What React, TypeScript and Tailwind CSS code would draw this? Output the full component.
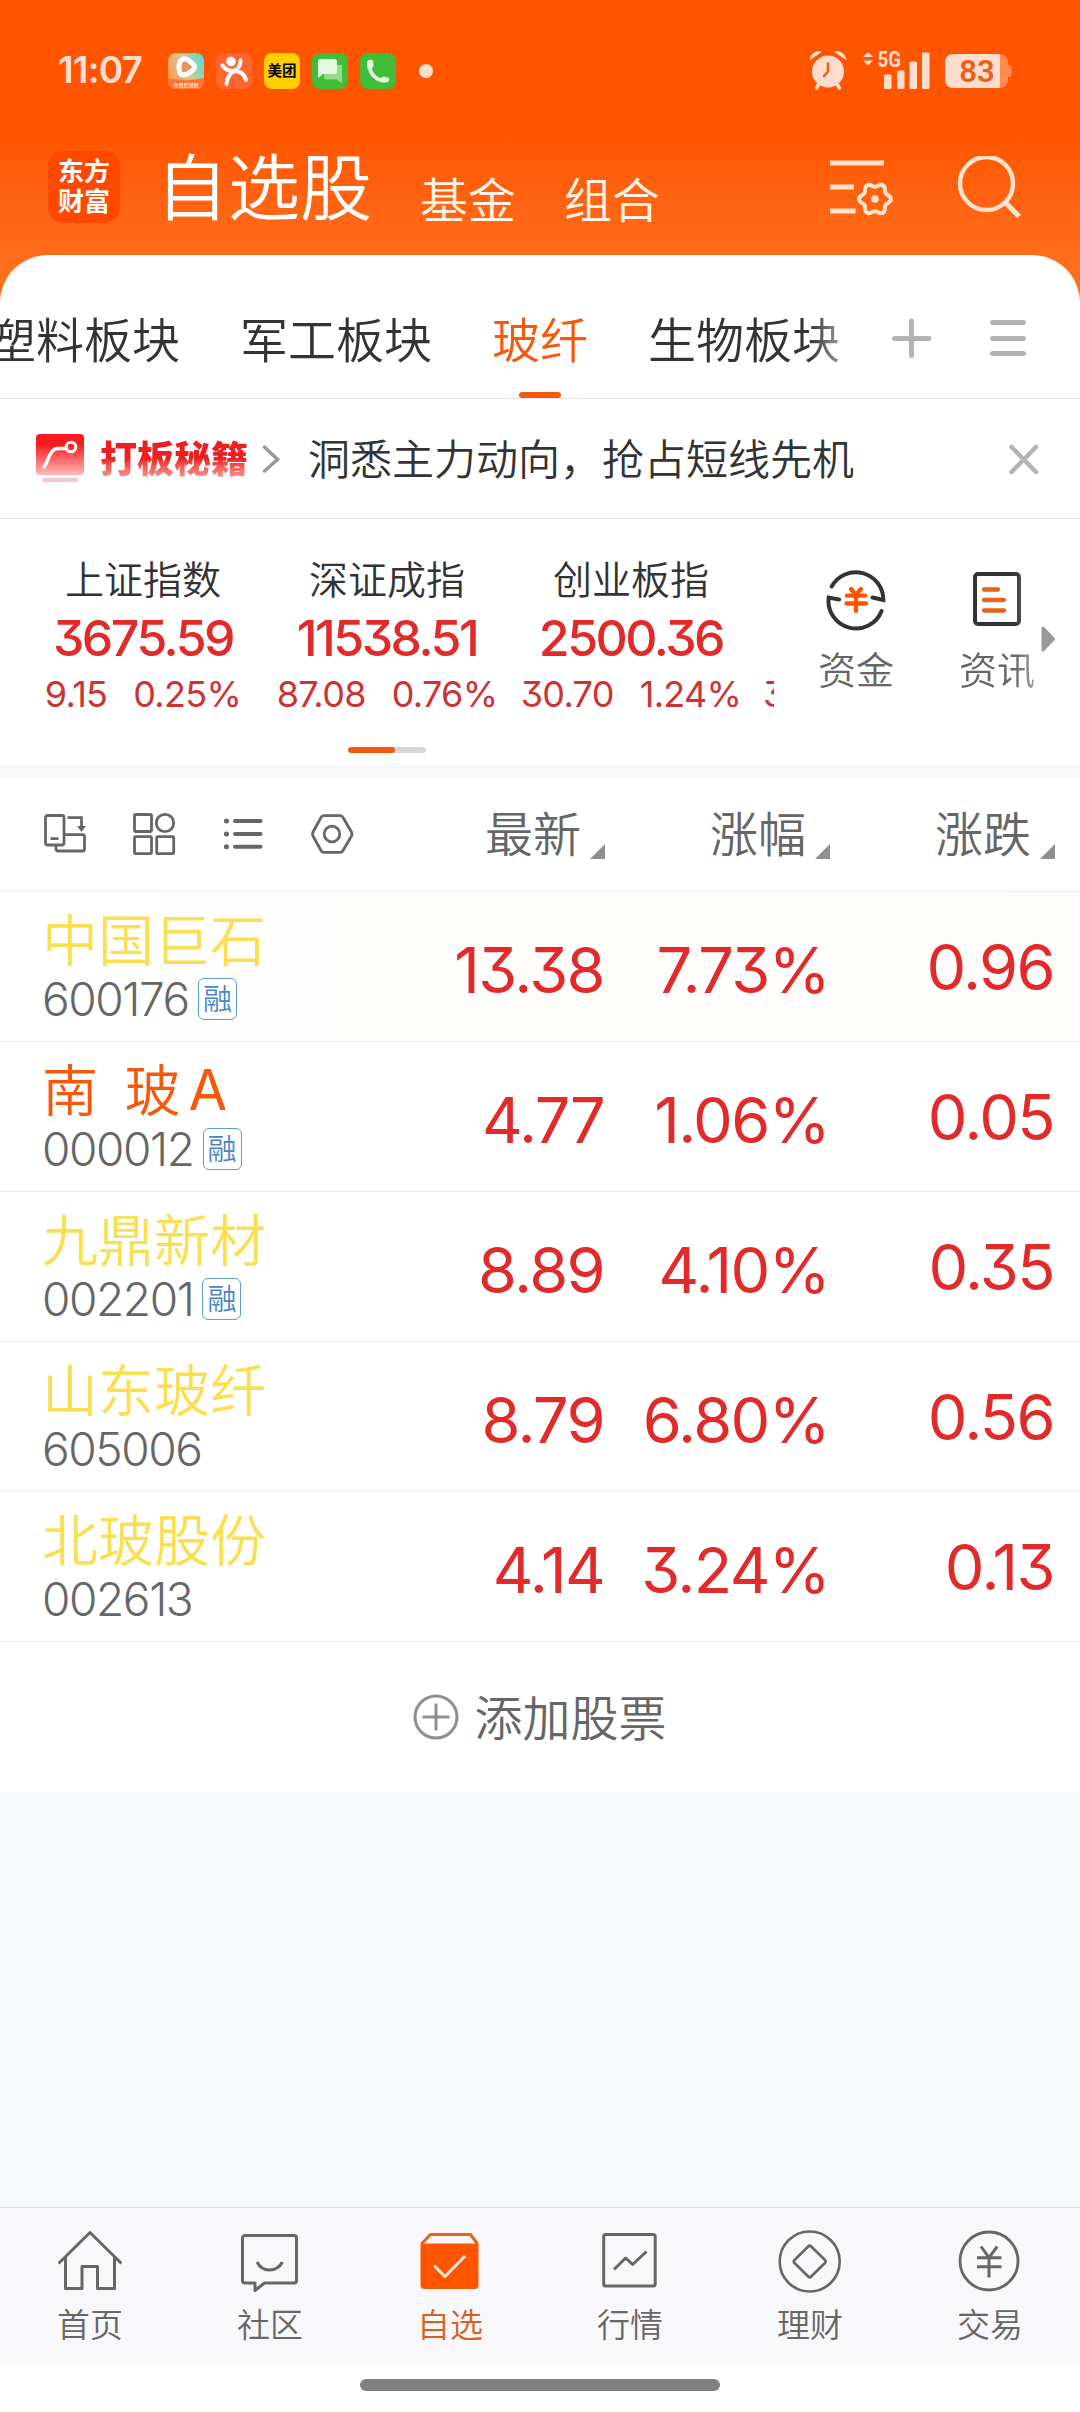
import type { ReactNode } from "react";

const indices = [
  { name: "上证指数", value: "3675.59", change: "9.15", percent: "0.25%" },
  { name: "深证成指", value: "11538.51", change: "87.08", percent: "0.76%" },
  { name: "创业板指", value: "2500.36", change: "30.70", percent: "1.24%" },
];

const stocks = [
  { name: "中国巨石", suffix: "", code: "600176", margin: true, price: "13.38", percent: "7.73%", change: "0.96", color: "text-[#fbdf52]", row: "bg-linear-to-r from-white to-[#fffdfb]" },
  { name: "南 玻", suffix: "A", code: "000012", margin: true, price: "4.77", percent: "1.06%", change: "0.05", color: "text-[#f4590c]", row: "bg-white" },
  { name: "九鼎新材", suffix: "", code: "002201", margin: true, price: "8.89", percent: "4.10%", change: "0.35", color: "text-[#fbdf52]", row: "bg-white" },
  { name: "山东玻纤", suffix: "", code: "605006", margin: false, price: "8.79", percent: "6.80%", change: "0.56", color: "text-[#fbdf52]", row: "bg-white" },
  { name: "北玻股份", suffix: "", code: "002613", margin: false, price: "4.14", percent: "3.24%", change: "0.13", color: "text-[#fbdf52]", row: "bg-white" },
];

// six-lobed gear outline around (cx, cy)
const gearPath = (cx: number, cy: number, r: number, depth: number) => {
  const points = Array.from({ length: 72 }, (_, i) => {
    const a = (i * Math.PI) / 36;
    const d = r + depth * Math.cos(6 * a);
    return `${(cx + d * Math.cos(a)).toFixed(2)} ${(cy + d * Math.sin(a)).toFixed(2)}`;
  });
  return `M${points.join("L")}Z`;
};

const StatusBar = () => (
  <div className="flex h-[142px] items-center pl-[58px] pr-[68px] text-[#ffddcc]">
    <span className="w-[110px] pb-[3px] font-[Inter] text-[37px] font-semibold leading-none tracking-[-0.800px]">11:07</span>
    <div className="flex items-center gap-3">
      <svg className="size-9" viewBox="0 0 36 36">
        <defs>
          <linearGradient id="video" x1="0" y1="0.6" x2="1" y2="0.2">
            <stop offset="0" stopColor="#ff9a4c" />
            <stop offset="0.5" stopColor="#d9c79a" />
            <stop offset="1" stopColor="#52e0cf" />
          </linearGradient>
        </defs>
        <rect width="36" height="36" rx="8" fill="url(#video)" />
        <path d="M0 25Q18 29 36 25V28a8 8 0 0 1-8 8H8a8 8 0 0 1-8-8Z" fill="#ff7336" />
        <path d="M13 7.500Q16 4.500 20 7L25 11Q28 14 25 17L19 21Q13 24 11.500 18Q10 11 13 7.500Z" fill="#e8925a" stroke="#fff" strokeWidth="5" />
        <text x="18" y="34" textAnchor="middle" fontSize="5" fontWeight="700" fill="#ffd9bd" fontFamily="Noto Sans CJK SC">免费看短剧</text>
      </svg>
      <svg className="size-9" viewBox="0 0 36 36">
        <rect width="36" height="36" rx="8" fill="#ff6630" />
        <circle cx="15" cy="8.500" r="4.800" fill="#fff" />
        <path d="M6.500 12.500Q11 19 18 17.500Q24 16 24.500 7.500M10.500 31Q11 22 18 18.500M17 18.500Q27 17 30 27" fill="none" stroke="#fff" strokeWidth="4" strokeLinecap="round" />
      </svg>
      <div className="flex size-9 items-center justify-center rounded-lg bg-[#ffd000] pb-0.5 font-['Noto_Sans_CJK_SC',sans-serif] text-[14.500px] font-bold leading-none text-black">美团</div>
      <svg className="size-9" viewBox="0 0 36 36">
        <rect width="36" height="36" rx="8" fill="#41bd38" />
        <path d="M12 12H30V30.500L25 26.500H14A2 2 0 0 1 12 24.500Z" fill="#92dc8a" />
        <path d="M8 6H22.500A2.500 2.500 0 0 1 25 8.500V18.500A2.500 2.500 0 0 1 22.500 21H11L6 25V8A2 2 0 0 1 8 6Z" fill="#e4f8e2" />
      </svg>
      <svg className="size-9" viewBox="0 0 36 36">
        <rect width="36" height="36" rx="8" fill="#41bd38" />
        <path d="M7 9C7 7 12 5.500 13 8L13.500 13C13.500 14.500 11.500 15 12 16.500C13 20 16.500 23.500 20 25C21.500 25.500 22 23.500 23.500 23.500L28 24.500C30.500 25.500 29 29 26.500 29.500C16 31 6 20 7 9Z" fill="#e4f8e2" />
      </svg>
    </div>
    <span className="ml-[23px] size-3.5 rounded-full bg-current" />
    <div className="ml-auto flex items-center">
      <svg className="h-10 w-[38px]" viewBox="0 0 38 40">
        <circle cx="18" cy="20.500" r="16" fill="currentColor" />
        <path d="M0 8.500C1 3 6 -.5 11 1ZM36 8.500C35 3 30 -.5 25 1Z" fill="currentColor" stroke="currentColor" strokeWidth="1" />
        <path d="M9 33l-2.500 4M27 33l2.500 4" stroke="currentColor" strokeWidth="3.500" strokeLinecap="round" />
        <path d="M18 12.500V20.500L14 25" fill="none" stroke="#f05d14" strokeWidth="2.600" strokeLinecap="round" strokeLinejoin="round" />
      </svg>
      <svg className="ml-[15px] h-10 w-[68px]" viewBox="0 0 68 40">
        <path d="M0 6l5-5 5 5ZM0 9.500l5 5 5-5Z" fill="currentColor" />
        <text x="14.500" y="16" fontSize="22" fontWeight="700" textLength="23.500" lengthAdjust="spacingAndGlyphs" fill="currentColor" fontFamily="Roboto">5G</text>
        <rect x="21" y="23.500" width="7.500" height="14.500" rx="1.500" fill="currentColor" />
        <rect x="34" y="19.500" width="7.500" height="18.500" rx="1.500" fill="currentColor" />
        <rect x="46.500" y="10.500" width="7.500" height="27.500" rx="1.500" fill="currentColor" />
        <rect x="59" y="1.500" width="7.500" height="36.500" rx="1.500" fill="currentColor" />
      </svg>
      <svg className="ml-3.5 h-[34px] w-[67px]" viewBox="0 0 67 34">
        <path d="M55 0a8 8 0 0 1 8 8v3h1.500a2 2 0 0 1 2 2v8a2 2 0 0 1-2 2H63v3a8 8 0 0 1-8 8Z" fill="#ff8b50" />
        <path d="M8 0H55V34H8A8 8 0 0 1 0 26V8A8 8 0 0 1 8 0Z" fill="currentColor" />
        <text x="32" y="28" textAnchor="middle" fontSize="31" fontWeight="600" fill="#f05d14" fontFamily="Roboto">83</text>
      </svg>
    </div>
  </div>
);

const Header = () => (
  <div className="flex h-[113px] items-start pl-12 pr-[58px] pt-[9px]">
    <div className="flex size-[72px] flex-col items-center justify-center rounded-[15px] bg-[#ff4800] pb-1 font-['Noto_Sans_CJK_SC',sans-serif] text-[26px] font-bold leading-[30px] text-white">
      <span>东方</span>
      <span>财富</span>
    </div>
    <h1 className="ml-9 text-[72px] font-[350] leading-[64px] text-white">自选股</h1>
    <span className="ml-12 mt-[22px] text-[48px] leading-[48px] text-[#fff3e6]">基金</span>
    <span className="ml-12 mt-[22px] text-[48px] leading-[48px] text-[#fff3e6]">组合</span>
    <svg className="ml-auto mt-1.5 h-[62px] w-[66px]" viewBox="0 0 66 62" fill="none" stroke="#ffe3cb" strokeWidth="5">
      <path d="M1 6H55M1 30H25M1 54H26.500" />
      <path d={gearPath(46, 42, 14, 1.9)} strokeWidth="4" strokeLinejoin="round" />
      <circle cx="46" cy="42" r="3.800" fill="#ffe3cb" stroke="none" />
    </svg>
    <svg className="ml-[61px] mt-[5px] h-[68px] w-[66px]" viewBox="0 0 66 68" fill="none" stroke="#ffe3cb" strokeWidth="4.500">
      <circle cx="30.500" cy="27.500" r="26.500" />
      <path d="M49 46L63 60.500" strokeWidth="5" />
    </svg>
  </div>
);

const GroupTabs = () => (
  <div className="flex h-36 border-b border-[#e3e3e3]">
    <div className="flex w-[838px] gap-[60px] overflow-hidden whitespace-nowrap text-[48px] leading-[48px] text-[#333] mask-r-from-[810px] mask-r-to-[870px]">
      <span className="-ml-3 shrink-0 pt-[58px]">塑料板块</span>
      <span className="shrink-0 pt-[58px]">军工板块</span>
      <span className="flex shrink-0 flex-col items-center justify-between pt-[58px] text-[#f4590c]">
        玻纤
        <span className="h-1.5 w-[42px] rounded-full bg-[#f4590c]" />
      </span>
      <span className="shrink-0 pt-[58px]">生物板块</span>
    </div>
    <svg className="ml-[53px] mt-[63px] size-10" viewBox="0 0 40 40" stroke="#b3b3b3" strokeWidth="5" strokeLinecap="round">
      <path d="M20.500 3V37.500M3.500 20.500H38" />
    </svg>
    <svg className="ml-[58px] mt-[63px] size-10" viewBox="0 0 40 40" stroke="#b3b3b3" strokeWidth="5" strokeLinecap="round">
      <path d="M3.500 4.500H34.500M3.500 20.500H34.500M3.500 35.500H34.500" />
    </svg>
  </div>
);

const Promo = () => (
  <div className="flex h-[120px] items-center border-b border-[#e3e3e3] pl-9 pr-[41px]">
    <svg className="h-[50px] w-12" viewBox="0 0 48 50">
      <defs>
        <linearGradient id="promo" x1="0" y1="0" x2="0" y2="1">
          <stop offset="0.250" stopColor="#fc1a1e" />
          <stop offset="1" stopColor="#fdb9ba" />
        </linearGradient>
      </defs>
      <rect width="48" height="41" rx="4" fill="url(#promo)" />
      <rect x="6" y="44" width="36" height="4" rx="2" fill="#fac4c5" />
      <path d="M8 33C13 27 13 15 22 14.500H30" fill="none" stroke="#fff" strokeWidth="3.500" strokeLinecap="round" />
      <circle cx="35" cy="13" r="4.800" fill="none" stroke="#fff" strokeWidth="3" />
    </svg>
    <span className="ml-4 bg-linear-to-b from-[#ee1f23] from-50% to-[#fb9b9c] to-100% bg-clip-text pb-1 text-[37px] font-black leading-[38px] text-transparent">打板秘籍</span>
    <svg className="ml-3.5 h-[30px] w-5" viewBox="0 0 20 30" fill="none" stroke="#999" strokeWidth="3.500" strokeLinecap="round">
      <path d="M2.500 3L15.500 15.500L2.500 27" />
    </svg>
    <span className="ml-[26px] pb-1 text-[42px] leading-[42px] text-[#333]">洞悉主力动向，抢占短线先机</span>
    <svg className="ml-auto size-8" viewBox="0 0 32 32" stroke="#b3b3b3" strokeWidth="4.500" strokeLinecap="round">
      <path d="M4.500 4L29 29M29 4L4.500 29" />
    </svg>
  </div>
);

const Indices = () => (
  <div className="flex h-[246px]">
    <div className="w-[774px] overflow-hidden">
      <div className="flex w-[1100px] pl-[21px]">
        {indices.map((item) => (
          <div key={item.name} className="flex w-[244px] flex-col items-center whitespace-nowrap pt-9">
            <span className="text-[39px] leading-[44px] text-[#333]">{item.name}</span>
            <span className="mt-[13px] font-[Inter] text-[50px] font-medium leading-[52px] tracking-[-2.500px] text-[#e12b2b] [font-feature-settings:'cv09']">{item.value}</span>
            <span className="mt-[11px] flex gap-[26px] font-[Inter] text-[36px] font-[370] leading-[38px] tracking-[-0.700px] text-[#cc3333] [font-feature-settings:'cv09']">
              <span>{item.change}</span>
              <span>{item.percent}</span>
            </span>
          </div>
        ))}
        <span className="mt-[156px] pl-2.5 font-[Inter] text-[36px] font-[370] leading-[38px] text-[#cc3333] [font-feature-settings:'cv09']">35.22</span>
      </div>
      <div className="ml-[348px] mt-[34px] h-1.5 w-[78px] overflow-hidden rounded-full bg-[#d3d7dc]">
        <div className="h-full w-[47px] rounded-full bg-[#f4590c]" />
      </div>
    </div>
    <div className="flex flex-1 pl-[41px] pt-12 text-[38px] leading-[38px] text-[#666]">
      <div className="flex w-[82px] flex-col items-center gap-[18px]">
        <svg className="size-16" viewBox="0 0 64 64" fill="none" strokeLinecap="round">
          <path d="M7.700 19.500A27.500 27.500 0 0 1 59.300 33L48.500 30.500M57.600 44A27.500 27.500 0 0 1 4.700 30.500L15 32.500" stroke="#333" strokeWidth="4" />
          <path d="M27 22L32 28L37 22M23 28.700H41M22.500 36.500H42M32 28V44" stroke="#ff5500" strokeWidth="4.300" />
        </svg>
        <span className="whitespace-nowrap">资金</span>
      </div>
      <div className="ml-[59px] flex w-[82px] flex-col items-center gap-[18px] mask-r-from-70% mask-r-to-140%">
        <svg className="size-16" viewBox="0 0 64 64" fill="none">
          <rect x="10" y="7" width="44" height="50" rx="3" stroke="#333" strokeWidth="4" />
          <path d="M19 22.500H33M19 33H39M19 43.500H39" stroke="#e8621c" strokeWidth="4.300" strokeLinecap="round" />
        </svg>
        <span className="whitespace-nowrap">资讯</span>
      </div>
      <svg className="ml-0.5 mt-[59px] h-[26px] w-4" viewBox="0 0 16 26">
        <path d="M3 2V24L13.500 13Z" fill="#999" stroke="#999" strokeWidth="3" strokeLinejoin="round" />
      </svg>
    </div>
  </div>
);

const Column = ({ label }: { label: string }) => (
  <div className="flex w-[225px] items-end justify-end">
    <span className="whitespace-nowrap">{label}</span>
    <svg className="mb-[-4px] ml-[9px] size-[15px]" viewBox="0 0 15 15">
      <path d="M15 0V15H0Z" fill="#8e8e93" />
    </svg>
  </div>
);

const TableHead = () => (
  <div className="flex h-[115px] items-start border-b border-[#e8e8e8] bg-white pl-[42px] pr-[25px] pt-[30px] text-[48px] leading-[48px] text-[#666]">
    <div className="flex flex-1 gap-[41px] pt-[3px]">
      <svg className="size-12 shrink-0" viewBox="0 0 48 48" fill="none" stroke="#666" strokeWidth="2.800">
        <rect x="3.500" y="5.500" width="18.500" height="29.500" rx="2" />
        <path d="M8.500 28.700H16.500M22 24.700H40.500A2 2 0 0 1 42.500 26.700V39A2 2 0 0 1 40.500 41H16A2 2 0 0 1 14 39V35M25.500 7.700H39.500V17" />
        <path d="M35 16H44L39.500 22Z" fill="#666" stroke="none" />
      </svg>
      <svg className="size-12 shrink-0" viewBox="1 0 48 48" fill="none" stroke="#666" strokeWidth="2.800">
        <rect x="4.500" y="4.500" width="17" height="17" rx="1" />
        <circle cx="35" cy="13" r="8.700" />
        <rect x="4.500" y="26.700" width="17" height="17" rx="1" />
        <rect x="26.700" y="26.700" width="17" height="17" rx="1" />
      </svg>
      <svg className="size-12 shrink-0" viewBox="2 0 48 48" stroke="#666" strokeWidth="4" strokeLinecap="round">
        <path d="M17 11H42.500M17 24H42.500M17 36.700H42.500" />
        <path d="M8.400 11H8.500M8.400 24H8.500M8.400 36.700H8.500" strokeWidth="5" />
      </svg>
      <svg className="size-12 shrink-0" viewBox="1 0 48 48" fill="none" stroke="#666" strokeWidth="2.800" strokeLinejoin="round">
        <path d="M15.500 5.700H32.500Q34 5.700 35 7.500L43.500 22Q44.500 24 43.500 26L35 40.500Q34 42.300 32.500 42.300H15.500Q14 42.300 13 40.500L5 26Q4 24 5 22L13 7.500Q14 5.700 15.500 5.700Z" />
        <circle cx="24" cy="24" r="7.800" />
      </svg>
    </div>
    <Column label="最新" />
    <Column label="涨幅" />
    <Column label="涨跌" />
  </div>
);

const StockRow = ({ stock }: { stock: (typeof stocks)[number] }) => (
  <div className={`flex h-[150px] border-b border-[#ebebeb] pl-[42px] pr-[26px] ${stock.row}`}>
    <div className="flex-1">
      <div className={`mt-[17px] flex h-14 whitespace-pre text-[56px] leading-[56px] [word-spacing:14px] ${stock.color}`}>
        <span>{stock.name}</span>
        {stock.suffix && <span className="ml-2 pt-[3px] font-[Inter] font-normal">{stock.suffix}</span>}
      </div>
      <div className="mt-[13px] flex items-center gap-[9px]">
        <span className="font-[Inter] text-[46px] leading-[42px] tracking-[-1.400px] text-[#666]">{stock.code}</span>
        {stock.margin && (
          <span className="flex h-[42px] w-[39px] items-center justify-center rounded-md border border-[#5b9bd5] pb-1 text-[29px] leading-none text-[#4a86c5]">融</span>
        )}
      </div>
    </div>
    <div className="flex pt-[45px] text-right font-[Inter] text-[63px] font-[380] leading-[66px] tracking-[-1.600px] text-[#e12b2b] [font-feature-settings:'cv09']">
      <span className="w-[226px]">{stock.price}</span>
      <span className="w-[225px]">{stock.percent}</span>
      <span className="-mt-[3px] w-[225px]">{stock.change}</span>
    </div>
  </div>
);

const NavItem = ({ label, active, children }: { label: string; active?: boolean; children: ReactNode }) => (
  <div className={active ? "flex w-[180px] flex-col items-center pt-5 text-[#d9601f]" : "flex w-[180px] flex-col items-center pt-5 text-[#666]"}>
    <svg className="h-[66px] w-16" viewBox="0 0 64 66" fill="none" stroke="currentColor" strokeWidth="3" strokeLinejoin="round">
      {children}
    </svg>
    <span className="mt-[13px] text-[33px] leading-[33px]">{label}</span>
  </div>
);

const BottomNav = () => (
  <div className="flex h-[157px] border-t border-[#e3e3e3] bg-[#f8f8fb]">
    <NavItem label="首页">
      <path d="M.5 35.500L32 4.500L63.500 35.500M7.500 29V60.500H24V38.500H39.500V60.500H56.500V29" />
    </NavItem>
    <NavItem label="社区">
      <path d="M7 7.500H56A2.500 2.500 0 0 1 58.500 10V52.500A2.500 2.500 0 0 1 56 55H26.500L17 62.500V55H7A2.500 2.500 0 0 1 4.500 52.500V10A2.500 2.500 0 0 1 7 7.500Z" />
      <path d="M19 34Q23 42 31.500 42T44.500 34" />
    </NavItem>
    <NavItem label="自选" active>
      <path d="M3.500 16L12.500 6.500H52.500L59.500 16" stroke="#e8621c" />
      <path d="M2.500 15.500H60.500V57A4 4 0 0 1 56.500 61H6.500A4 4 0 0 1 2.500 57Z" fill="#ff5500" stroke="none" />
      <path d="M16 37.500L27 48.500L47 28" stroke="#ffe9d6" />
    </NavItem>
    <NavItem label="行情">
      <rect x="5.700" y="6.500" width="51.500" height="51.500" rx="2" />
      <path d="M16 41.500L27.700 30L34.600 36.500L48.500 23.500" />
    </NavItem>
    <NavItem label="理财">
      <circle cx="31.700" cy="33.500" r="30" strokeWidth="2.600" />
      <path d="M30.200 18.500Q31.700 17 33.200 18.500L47 32Q48.500 33.500 47 35L33.200 48.500Q31.700 50 30.200 48.500L16.500 35Q15 33.500 16.500 32Z" strokeWidth="2.600" />
    </NavItem>
    <NavItem label="交易">
      <circle cx="31" cy="33" r="29" strokeWidth="2.800" />
      <path d="M23 18.500L31 29.700L39.300 18.500M19 29.700H43.500M19 38.700H43.500M31 29.700V49.500" />
    </NavItem>
  </div>
);

export default function App() {
  return (
    <div className="flex h-[2412px] w-[1080px] flex-col overflow-hidden bg-[#f7f8fa] font-['Noto_Sans_CJK_SC',sans-serif] font-[350]">
      <div className="h-[320px] shrink-0 bg-linear-to-b from-[#ff5500] from-[135px] to-[#ff701d] to-[270px]">
        <StatusBar />
        <Header />
      </div>
      <div className="-mt-[65px] rounded-t-[48px] bg-white">
        <GroupTabs />
        <Promo />
        <Indices />
      </div>
      <div className="mt-3">
        <TableHead />
        {stocks.map((stock) => (
          <StockRow key={stock.code} stock={stock} />
        ))}
        <div className="flex h-[150px] items-center justify-center gap-[15px] bg-white text-[48px] leading-[48px] text-[#666]">
          <svg className="size-[46px]" viewBox="0 0 46 46" fill="none" stroke="#8e8e93" strokeWidth="3">
            <circle cx="23" cy="23" r="21" />
            <path d="M23 9.500V36.500M9.500 23H36.500" />
          </svg>
          <span className="pb-1">添加股票</span>
        </div>
      </div>
      <div className="mt-auto">
        <BottomNav />
        <div className="flex h-12 justify-center bg-white pt-[15px]">
          <div className="h-3 w-[360px] rounded-full bg-[#808080]" />
        </div>
      </div>
    </div>
  );
}
